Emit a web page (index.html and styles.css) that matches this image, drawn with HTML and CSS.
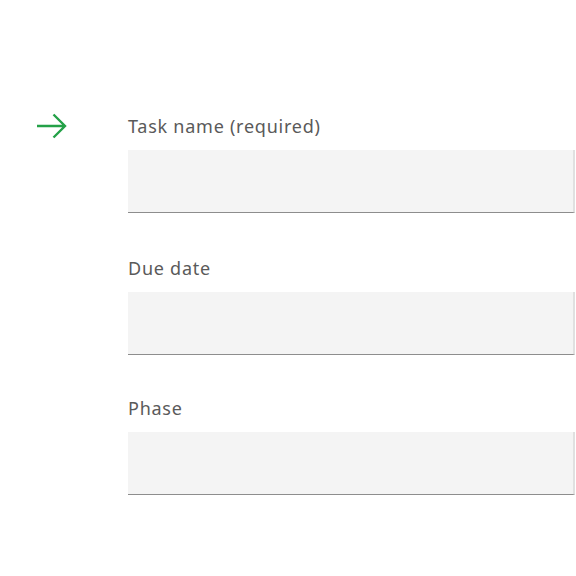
FILE: index.html
```html
<!DOCTYPE html>
<html>
<head>
<meta charset="utf-8">
<link rel="stylesheet" href="styles.css">
</head>
<body>
<div class="page">
  <div class="marker">
    <svg width="32" height="26" viewBox="0 0 32 26" aria-hidden="true">
      <path d="M1 13 H29.5 M17.5 1.5 L29 13 L17.5 24.5" fill="none" stroke="#24a148" stroke-width="2.4"/>
    </svg>
  </div>
  <form class="form">
    <div class="field">
      <label class="label">Task name (required)</label>
      <div class="input"></div>
    </div>
    <div class="field field-second">
      <label class="label">Due date</label>
      <div class="input"></div>
    </div>
    <div class="field">
      <label class="label">Phase</label>
      <div class="input"></div>
    </div>
  </form>
</div>
</body>
</html>
```
FILE: styles.css
```css
html, body {
  margin: 0;
  padding: 0;
  background: #ffffff;
}
.page {
  display: flex;
  padding-top: 114px;
  width: 576px;
  overflow: hidden;
}
.marker {
  width: 128px;
  padding-left: 36px;
  box-sizing: border-box;
  height: 24px;
  display: flex;
  align-items: center;
}
.marker svg {
  display: block;
}
.form {
  display: flex;
  flex-direction: column;
  gap: 41px;
  flex: 1;
}
.field {
  display: flex;
  flex-direction: column;
}
.field-second {
  margin-top: 2px;
}
.label {
  font-family: "Noto Sans", "Open Sans", sans-serif;
  font-size: 18px;
  line-height: 24px;
  letter-spacing: 0.75px;
  color: #5a5a5a;
  margin-bottom: 12px;
}
.input {
  height: 62px;
  background: #f4f4f4;
  border-bottom: 1px solid #8d8d8d;
  border-right: 2px solid #e0e0e0;
  width: 445px;
}
```
